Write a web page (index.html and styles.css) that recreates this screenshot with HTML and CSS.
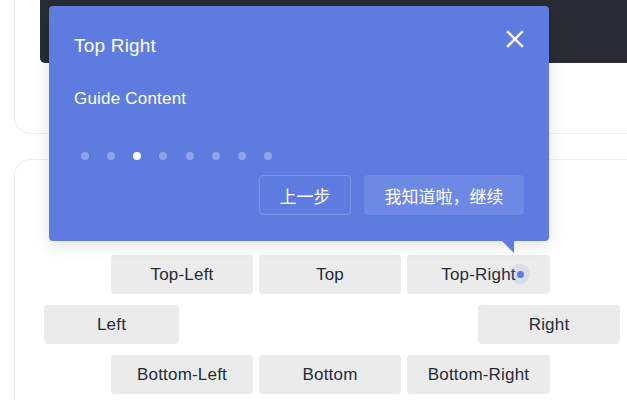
FILE: index.html
```html
<!DOCTYPE html>
<html lang="zh">
<head>
<meta charset="utf-8">
<title>Step Guide</title>
<link rel="stylesheet" href="styles.css">
</head>
<body>
<div class="page">
  <div class="card card-demo">
    <div class="code-block"></div>
  </div>
  <div class="card card-positions">
    <div class="row row-three">
      <button class="btn">Top-Left</button>
      <button class="btn">Top</button>
      <button class="btn btn-target">Top-Right<span class="beacon"><span class="beacon-dot"></span></span></button>
    </div>
    <div class="row row-sides">
      <button class="btn btn-left">Left</button>
      <button class="btn">Right</button>
    </div>
    <div class="row row-three">
      <button class="btn">Bottom-Left</button>
      <button class="btn">Bottom</button>
      <button class="btn btn-wide">Bottom-Right</button>
    </div>
  </div>
</div>

<div class="guide">
  <div class="guide-header">
    <span class="guide-title">Top Right</span>
    <svg class="guide-close" width="18" height="18" viewBox="0 0 18 18" aria-hidden="true">
      <path d="M2 2 L16 16 M16 2 L2 16" stroke="#ffffff" stroke-width="2.4" stroke-linecap="square" fill="none"/>
    </svg>
  </div>
  <div class="guide-content">Guide Content</div>
  <div class="guide-dots">
    <span class="dot"></span>
    <span class="dot"></span>
    <span class="dot dot-active"></span>
    <span class="dot"></span>
    <span class="dot"></span>
    <span class="dot"></span>
    <span class="dot"></span>
    <span class="dot"></span>
  </div>
  <div class="guide-actions">
    <button class="gbtn gbtn-prev">上一步</button>
    <button class="gbtn gbtn-next">我知道啦，继续</button>
  </div>
  <span class="guide-arrow"></span>
</div>
</body>
</html>
```
FILE: styles.css
```css
html, body {
  margin: 0;
  padding: 0;
  overflow: hidden;
  background: #ffffff;
}

body {
  font-family: "Liberation Sans", Arial, "Noto Sans CJK SC", sans-serif;
  color: #252b3a;
  width: 627px;
  height: 400px;
  position: relative;
}

.page {
  padding-left: 14px;
  width: 613px;
}

.card {
  border: 1px solid #eeeeef;
  border-right: none;
  border-radius: 16px 0 0 16px;
  background: #ffffff;
}

.card-demo {
  margin-top: -40px;
  padding: 0 0 70px 25px;
}

.code-block {
  height: 100px;
  background: #282b33;
  border-top: 2px solid #1f2227;
  border-radius: 0 0 0 5px;
}

.card-positions {
  margin-top: 25px;
  padding: 95px 0 20px 0;
}

.row {
  display: flex;
}

.row-three {
  padding-left: 96px;
  gap: 6px;
}

.row-sides {
  margin: 11px 0 11px 29px;
  width: 576px;
  justify-content: space-between;
}

.btn {
  position: relative;
  width: 142px;
  height: 39px;
  border: none;
  border-radius: 4px;
  background: #ebebeb;
  color: #252b3a;
  font-family: "Liberation Sans", Arial, sans-serif;
  font-size: 17px;
  letter-spacing: 0.2px;
  padding: 0;
}

.btn-target, .btn-wide {
  width: 143px;
}

.btn-left {
  width: 135px;
}

.beacon {
  position: absolute;
  left: 103px;
  top: 9px;
  width: 20px;
  height: 20px;
  border-radius: 50%;
  background: rgba(94, 124, 224, 0.13);
  display: flex;
  align-items: center;
  justify-content: center;
}

.beacon-dot {
  width: 7px;
  height: 7px;
  border-radius: 50%;
  background: #5e7ce0;
}

/* guide popover */
.guide {
  position: absolute;
  left: 49px;
  top: 6px;
  width: 500px;
  height: 235px;
  box-sizing: border-box;
  background: #5e7ce0;
  border-radius: 4px;
  box-shadow: 0 4px 16px rgba(0, 0, 0, 0.12);
  color: #ffffff;
  padding: 28px 25px 26px 25px;
  display: flex;
  flex-direction: column;
}

.guide-header {
  display: flex;
  justify-content: space-between;
  align-items: flex-start;
  height: 24px;
}

.guide-title {
  font-size: 19px;
  line-height: 24px;
  letter-spacing: 0.2px;
}

.guide-close {
  margin-top: -4px;
  margin-right: 0;
}

.guide-content {
  margin-top: 29px;
  font-size: 17px;
  line-height: 24px;
  letter-spacing: 0.2px;
}

.guide-dots {
  display: flex;
  gap: 18.15px;
  margin-top: 41px;
  padding-left: 7px;
}

.dot {
  width: 8px;
  height: 8px;
  border-radius: 50%;
  background: rgba(255, 255, 255, 0.3);
}

.dot-active {
  background: #ffffff;
}

.guide-actions {
  margin-top: auto;
  display: flex;
  justify-content: flex-end;
  gap: 13px;
}

.gbtn {
  height: 40px;
  border-radius: 4px;
  font-family: "Noto Sans CJK SC", "Liberation Sans", sans-serif;
  font-size: 17px;
  color: #ffffff;
  padding: 0;
}

.gbtn-prev {
  width: 92px;
  background: transparent;
  border: 1px solid rgba(255, 255, 255, 0.18);
}

.gbtn-next {
  width: 160px;
  background: rgba(255, 255, 255, 0.1);
  border: none;
}

.guide-arrow {
  position: absolute;
  left: 453px;
  top: 235px;
  width: 12px;
  height: 12px;
  background: #5e7ce0;
  clip-path: polygon(0 0, 100% 0, 100% 100%);
}
```
